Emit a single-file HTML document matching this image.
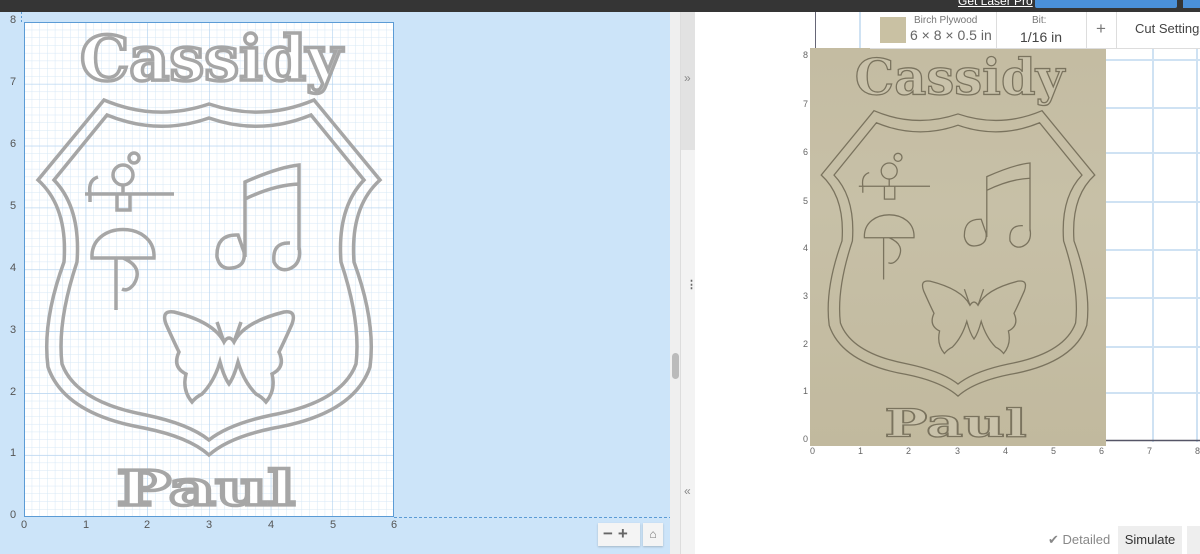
<!DOCTYPE html>
<html><head><meta charset="utf-8"><style>
*{margin:0;padding:0;box-sizing:border-box}
body{width:1200px;height:554px;overflow:hidden;background:#fff;font-family:"Liberation Sans",sans-serif;position:relative}
.abs{position:absolute}
.lbl{position:absolute;font-size:11px;color:#555}
.rl{position:absolute;font-size:9px;color:#666}
</style></head><body>
<div class="abs" style="left:0;top:0;width:1200px;height:12px;background:#353535"></div>
<div class="abs" style="left:958px;top:-6px;font-size:12px;color:#fff;text-decoration:underline">Get Laser Pro</div>
<div class="abs" style="left:1035px;top:0;width:142px;height:8px;background:#4a90d9;border-radius:0 0 2px 2px"></div>
<div class="abs" style="left:1183px;top:0;width:20px;height:8px;background:#4a90d9"></div>

<div class="abs" style="left:0;top:12px;width:670px;height:542px;background:#cce4f9"></div>
<svg class="abs" style="left:0;top:12px" width="670" height="542">
<defs>
<pattern id="minor" width="7.71" height="7.73" patternUnits="userSpaceOnUse" x="24" y="10">
<path d="M0,0H7.71M0,0V7.73" stroke="#d6e7f6" stroke-width="1" fill="none"/></pattern>
<pattern id="major" width="61.7" height="61.9" patternUnits="userSpaceOnUse" x="24" y="10">
<path d="M0,0H61.7M0,0V61.9" stroke="#aacdee" stroke-width="1" fill="none"/></pattern>
</defs>
<rect x="24" y="10" width="370" height="495" fill="#fff"/>
<rect x="24" y="10" width="370" height="495" fill="url(#minor)"/>
<rect x="24" y="10" width="370" height="495" fill="url(#major)"/>
<rect x="24.5" y="10.5" width="369" height="494" fill="none" stroke="#5b9bd5" stroke-width="1"/>
<line x1="394" y1="505.5" x2="670" y2="505.5" stroke="#5b9bd5" stroke-dasharray="3,2"/>
<line x1="21.5" y1="0" x2="21.5" y2="10" stroke="#5b9bd5" stroke-dasharray="2,2"/>
</svg>
<div class="lbl" style="left:10px;top:14px">8</div>
<div class="lbl" style="left:10px;top:76px">7</div>
<div class="lbl" style="left:10px;top:138px">6</div>
<div class="lbl" style="left:10px;top:200px">5</div>
<div class="lbl" style="left:10px;top:262px">4</div>
<div class="lbl" style="left:10px;top:324px">3</div>
<div class="lbl" style="left:10px;top:386px">2</div>
<div class="lbl" style="left:10px;top:447px">1</div>
<div class="lbl" style="left:10px;top:509px">0</div>
<div class="lbl" style="left:21px;top:519px">0</div>
<div class="lbl" style="left:83px;top:519px">1</div>
<div class="lbl" style="left:144px;top:519px">2</div>
<div class="lbl" style="left:206px;top:519px">3</div>
<div class="lbl" style="left:268px;top:519px">4</div>
<div class="lbl" style="left:330px;top:519px">5</div>
<div class="lbl" style="left:391px;top:519px">6</div>
<div class="abs" style="left:598px;top:523px;width:42px;height:23px;background:#f4f4f4;box-shadow:0 1px 2px rgba(0,0,0,.2);font-size:17px;font-weight:bold;color:#666;line-height:22px;padding-left:5px;letter-spacing:5px">−+</div>
<div class="abs" style="left:643px;top:523px;width:20px;height:23px;background:#f4f4f4;box-shadow:0 1px 2px rgba(0,0,0,.2);font-size:12px;color:#777;line-height:23px;text-align:center">⌂</div>

<svg class="abs" style="left:24px;top:22px;overflow:visible" width="370" height="495">
<defs>
<g id="design">
<text x="56" y="58" font-family="DejaVu Serif,serif" font-weight="bold" font-size="62" textLength="262" lengthAdjust="spacingAndGlyphs">Cassidy</text>
<text x="93" y="483" font-family="DejaVu Serif,serif" font-weight="bold" font-size="48" textLength="178" lengthAdjust="spacingAndGlyphs">Paul</text>
<g fill="none">
<path d="M80,78 Q132,100 185,82 Q238,100 290,78 L356,158 Q326,185 330,240 Q352,300 346,345 Q330,392 250,406 Q205,415 185,433 Q165,415 120,406 Q40,392 24,345 Q18,300 40,240 Q44,185 14,158 Z"/>
<path d="M83,93 Q134,114 185,96 Q236,114 287,93 L340,158 Q313,186 317,240 Q337,300 332,342 Q318,380 248,393 Q205,402 185,418 Q165,402 122,393 Q52,380 38,342 Q33,300 53,240 Q57,186 30,158 Z"/>
<circle cx="99" cy="153" r="10"/><circle cx="110" cy="136" r="5"/>
<path d="M99,163 V172 M61,172 H150 M74,155 Q64,158 66,172 V180 M93,172 V188 H106 V172 M68,236 C66,198 132,198 130,236 Z M92,236 V288 M99,236 Q120,245 110,262 Q104,270 98,267"/>
<path d="M214,213 Q192,212 193,235 Q196,248 208,246 Q222,244 220,230 Z M221,235 V160 Q255,145 275,143 V228 M221,177 Q250,163 275,162 M266,221 Q248,220 250,240 Q255,250 265,247 Q278,242 275,225"/>
<path d="M200,320 Q190,300 150,290 Q137,288 142,302 Q150,320 155,330 Q148,345 162,352 Q158,368 168,380 Q172,375 178,372 Q190,360 196,340 Q200,355 205,362 Q210,355 214,340 Q220,360 232,372 Q238,375 242,380 Q252,368 248,352 Q262,345 255,330 Q260,320 268,302 Q273,288 260,290 Q220,300 210,320 Q205,312 200,320 Z M193,300 L200,320 M217,300 L210,320"/>
</g>
</g>
</defs>
<use href="#design" stroke="#a6a6a6" stroke-width="3.5" fill="#fff"/>
</svg>

<div class="abs" style="left:670px;top:12px;width:11px;height:542px;background:#efefef;border-right:1px solid #ddd"></div>
<div class="abs" style="left:672px;top:353px;width:7px;height:26px;background:#bbb;border-radius:4px"></div>
<div class="abs" style="left:681px;top:12px;width:14px;height:138px;background:#e2e2e2"></div>
<div class="abs" style="left:681px;top:150px;width:14px;height:404px;background:#f3f3f3"></div>
<div class="abs" style="left:684px;top:71px;font-size:12px;color:#888">»</div>
<div class="abs" style="left:684px;top:484px;font-size:12px;color:#888">«</div>
<div class="abs" style="left:686px;top:278px;font-size:11px;color:#666;font-weight:bold">⋮</div>

<svg class="abs" style="left:695px;top:12px" width="505" height="542">
<g stroke="#cfe2f3" stroke-width="2">
<line x1="458" y1="0" x2="458" y2="430"/><line x1="502" y1="0" x2="502" y2="430"/>
<line x1="408" y1="96" x2="505" y2="96"/><line x1="408" y1="141" x2="505" y2="141"/>
<line x1="408" y1="190" x2="505" y2="190"/><line x1="408" y1="238" x2="505" y2="238"/>
<line x1="408" y1="286" x2="505" y2="286"/><line x1="408" y1="335" x2="505" y2="335"/>
<line x1="408" y1="381" x2="505" y2="381"/><line x1="408" y1="48" x2="505" y2="48"/>
<line x1="165" y1="0" x2="165" y2="40"/>
</g>
<line x1="120.5" y1="0" x2="120.5" y2="40" stroke="#667"/>
<line x1="408" y1="428.5" x2="505" y2="428.5" stroke="#556" stroke-width="1.5"/>
</svg>
<div class="abs" style="left:810px;top:48px;width:296px;height:398px;background:linear-gradient(180deg,#c4bca2,#c7c0a7 40%,#c1b99e);"></div>
<svg class="abs" style="left:810px;top:48px;overflow:visible" width="296" height="398">
<g transform="scale(0.8,0.804)">
<use href="#design" stroke="#7a735e" stroke-width="1.6" fill="#c9c2aa"/>
</g>
</svg>
<div class="rl" style="left:803px;top:50px">8</div>
<div class="rl" style="left:803px;top:99px">7</div>
<div class="rl" style="left:803px;top:147px">6</div>
<div class="rl" style="left:803px;top:196px">5</div>
<div class="rl" style="left:803px;top:243px">4</div>
<div class="rl" style="left:803px;top:291px">3</div>
<div class="rl" style="left:803px;top:339px">2</div>
<div class="rl" style="left:803px;top:386px">1</div>
<div class="rl" style="left:803px;top:434px">0</div>
<div class="rl" style="left:810px;top:446px">0</div>
<div class="rl" style="left:858px;top:446px">1</div>
<div class="rl" style="left:906px;top:446px">2</div>
<div class="rl" style="left:955px;top:446px">3</div>
<div class="rl" style="left:1003px;top:446px">4</div>
<div class="rl" style="left:1051px;top:446px">5</div>
<div class="rl" style="left:1099px;top:446px">6</div>
<div class="rl" style="left:1147px;top:446px">7</div>
<div class="rl" style="left:1195px;top:446px">8</div>

<div class="abs" style="left:870px;top:12px;width:330px;height:37px;background:#fff;border-bottom:1px solid #ddd"></div>
<div class="abs" style="left:880px;top:17px;width:26px;height:26px;background:#c9c1a3"></div>
<div class="abs" style="left:914px;top:15px;font-size:10px;color:#777">Birch Plywood</div>
<div class="abs" style="left:910px;top:27px;font-size:14px;color:#666">6 × 8 × 0.5 in</div>
<div class="abs" style="left:996px;top:12px;width:1px;height:37px;background:#ddd"></div>
<div class="abs" style="left:1032px;top:15px;font-size:10px;color:#777">Bit:</div>
<div class="abs" style="left:1020px;top:29px;font-size:14px;color:#444">1/16 in</div>
<div class="abs" style="left:1086px;top:12px;width:1px;height:37px;background:#ddd"></div>
<div class="abs" style="left:1096px;top:19px;font-size:17px;color:#777">+</div>
<div class="abs" style="left:1116px;top:12px;width:1px;height:37px;background:#ddd"></div>
<div class="abs" style="left:1135px;top:21px;font-size:13px;color:#444;white-space:nowrap">Cut Settings</div>

<div class="abs" style="left:1048px;top:532px;font-size:13px;color:#888">✔ Detailed</div>
<div class="abs" style="left:1118px;top:526px;width:64px;height:28px;background:#eee;font-size:13px;color:#333;text-align:center;line-height:28px">Simulate</div>
<div class="abs" style="left:1187px;top:526px;width:13px;height:28px;background:#eee"></div>
</body></html>
